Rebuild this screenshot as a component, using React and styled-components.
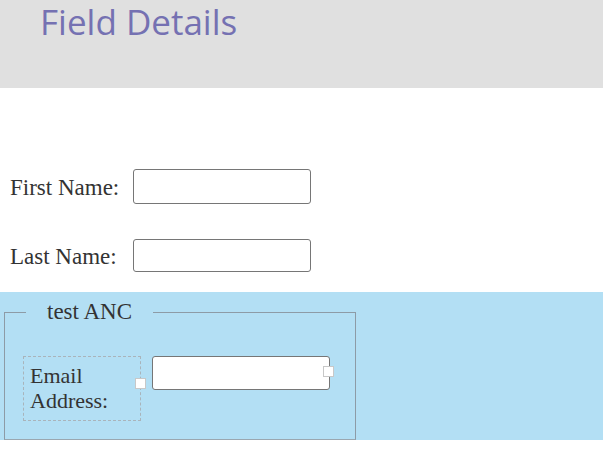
import React from 'react';
import styled, { createGlobalStyle } from 'styled-components';

const GlobalStyle = createGlobalStyle`
  html, body {
    margin: 0;
    padding: 0;
    background: #ffffff;
  }
  body {
    font-family: "Liberation Serif", serif;
  }
`;

const Header = styled.header`
  height: 88px;
  background-color: #e0e0e0;
  padding-left: 40px;
  box-sizing: border-box;
`;

const Title = styled.h1`
  margin: 0;
  font-family: "Open Sans", sans-serif;
  font-weight: 400;
  font-size: 35px;
  line-height: 44px;
  color: #7571b2;
`;

const Form = styled.section`
  height: 204px;
  box-sizing: border-box;
  padding: 81px 0 0 10px;
  display: grid;
  grid-template-columns: 123px 178px;
  grid-auto-rows: 34px;
  row-gap: 35px;
  align-items: center;
`;

const Label = styled.label`
  font-size: 23px;
  color: #333333;
  padding-top: 3px;
`;

const Input = styled.input`
  box-sizing: border-box;
  width: 178px;
  height: ${(p) => p.$h || 34}px;
  border: 1px solid #767676;
  border-radius: 3px;
  background: #ffffff;
  margin: 0;
  padding: 0 4px;
`;

const Band = styled.section`
  height: 148px;
  background-color: #b3dff4;
  box-sizing: border-box;
  padding: 8px 0 0 4px;
`;

const Group = styled.fieldset`
  width: 352px;
  height: 140px;
  box-sizing: border-box;
  margin: 0;
  padding: 0 18px 0 18px;
  border: 1px solid #8d9ba6;
  border-bottom-color: #9aa7b0;
`;

const Legend = styled.legend`
  padding: 0 21px;
  margin-left: 3px;
  font-size: 23px;
  line-height: 24px;
  color: #333333;
`;

const Row = styled.div`
  display: flex;
  align-items: flex-start;
  gap: 11px;
  margin-top: 32px;
`;

const FieldBox = styled.div`
  position: relative;
`;

const DashedLabel = styled.label`
  display: block;
  box-sizing: border-box;
  width: 118px;
  height: 65px;
  border: 1px dashed #a9b4bb;
  padding: 6px 6px;
  font-size: 22px;
  line-height: 25px;
  color: #333333;
`;

const Handle = styled.span`
  position: absolute;
  width: 9px;
  height: 9px;
  background: #ffffff;
  border: 1px solid #c8c8c8;
  right: ${(p) => p.$right}px;
  top: ${(p) => p.$top}px;
`;

export default function App() {
  return (
    <>
      <GlobalStyle />
      <Header>
        <Title>Field Details</Title>
      </Header>
      <Form>
        <Label htmlFor="first">First Name:</Label>
        <Input id="first" $h={35} />
        <Label htmlFor="last">Last Name:</Label>
        <Input id="last" $h={33} />
      </Form>
      <Band>
        <Group>
          <Legend>test ANC</Legend>
          <Row>
            <FieldBox>
              <DashedLabel htmlFor="email">
                Email
                <br />
                Address:
              </DashedLabel>
              <Handle $right={-5} $top={22} />
            </FieldBox>
            <FieldBox>
              <Input id="email" />
              <Handle $right={-4} $top={10} />
            </FieldBox>
          </Row>
        </Group>
      </Band>
    </>
  );
}
